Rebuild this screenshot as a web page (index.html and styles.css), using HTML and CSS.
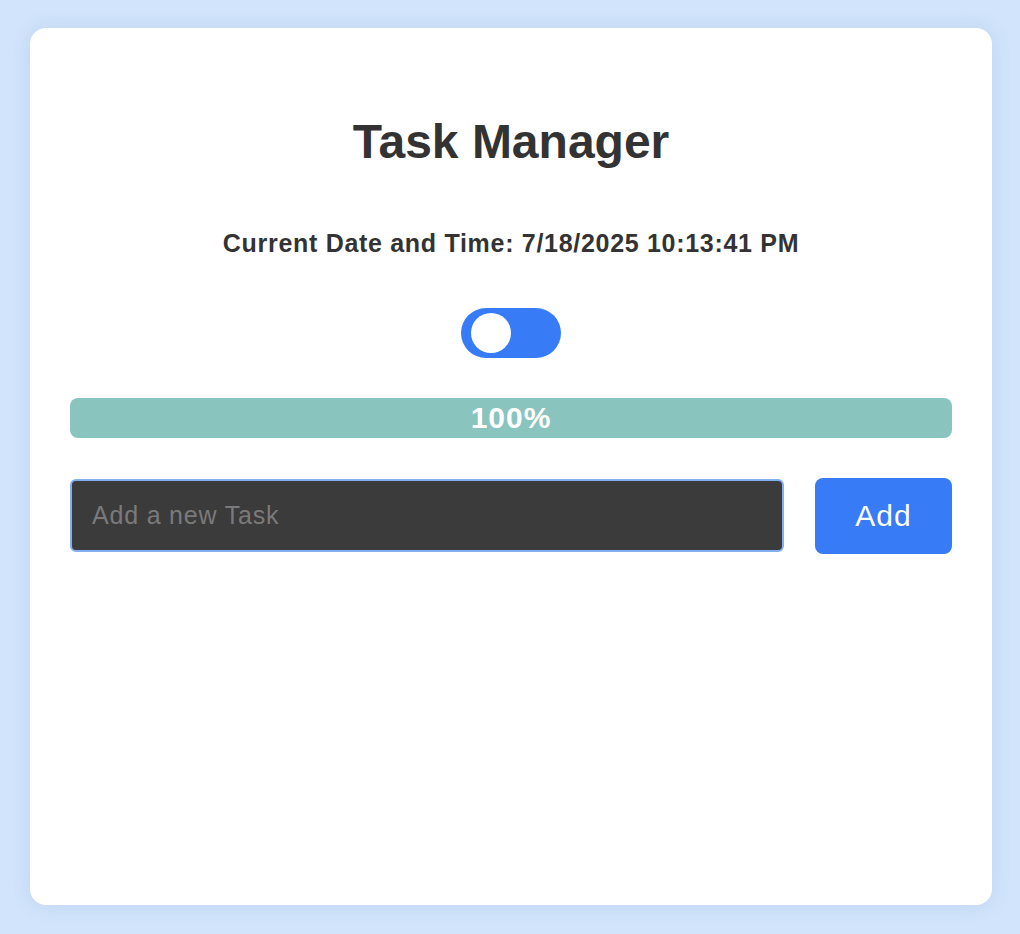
FILE: index.html
```html
<!DOCTYPE html>
<html>
<head>
<meta charset="utf-8">
<link rel="stylesheet" href="styles.css">
</head>
<body>
<div class="page">
  <div class="card">
    <h1 class="title">Task Manager</h1>
    <p class="datetime">Current Date and Time: 7/18/2025 10:13:41 PM</p>
    <div class="toggle-row">
      <div class="toggle"><div class="knob"></div></div>
    </div>
    <div class="progress"><span class="progress-label">100%</span></div>
    <div class="add-row">
      <input class="task-input" type="text" placeholder="Add a new Task">
      <button class="add-btn">Add</button>
    </div>
  </div>
</div>
</body>
</html>
```

FILE: styles.css
```css
html, body {
  margin: 0;
  padding: 0;
}
body {
  background: #d1e4fb;
  font-family: "Liberation Sans", Arial, sans-serif;
  color: #333;
}
.page {
  padding: 28px 28px 29px 30px;
  height: 934px;
  box-sizing: border-box;
}
.card {
  background: #fff;
  border-radius: 16px;
  box-shadow: 0 0 20px rgba(60, 100, 160, 0.12);
  height: 877px;
  box-sizing: border-box;
  padding: 40px;
  display: flex;
  flex-direction: column;
}
.title {
  margin: 46px 0 0;
  font-size: 48px;
  font-weight: bold;
  text-align: center;
  line-height: 1.15;
}
.datetime {
  margin: 60px 0 0;
  font-size: 25px;
  letter-spacing: 0.7px;
  font-weight: bold;
  text-align: center;
  line-height: 1.15;
}
.toggle-row {
  display: flex;
  justify-content: center;
  margin-top: 50px;
}
.toggle {
  width: 100px;
  height: 50px;
  border-radius: 25px;
  background: #377bf6;
  box-sizing: border-box;
  padding: 5px 10px;
}
.knob {
  width: 40px;
  height: 40px;
  border-radius: 50%;
  background: #fff;
}
.progress {
  margin-top: 40px;
  height: 40px;
  border-radius: 8px;
  background: #89c4bf;
  display: flex;
  align-items: center;
  justify-content: center;
}
.progress-label {
  color: #fff;
  font-weight: bold;
  font-size: 30px;
  letter-spacing: 1px;
}
.add-row {
  margin-top: 40px;
  display: flex;
  align-items: center;
  gap: 31px;
}
.task-input {
  flex: 1;
  height: 73px;
  box-sizing: border-box;
  background: #3b3b3b;
  border: 2px solid #82aef2;
  border-radius: 6px;
  padding: 0 20px;
  font-family: "Liberation Sans", Arial, sans-serif;
  font-size: 25px;
  letter-spacing: 0.8px;
  color: #eee;
  outline: none;
}
.task-input::placeholder {
  color: #7a7a7a;
}
.add-btn {
  width: 137px;
  height: 76px;
  border: none;
  border-radius: 8px;
  background: #377bf6;
  color: #fff;
  font-family: "Liberation Sans", Arial, sans-serif;
  font-size: 30px;
  letter-spacing: 1px;
}
```
